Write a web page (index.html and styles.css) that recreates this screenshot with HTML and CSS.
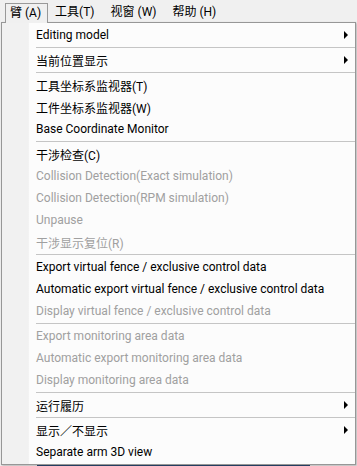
FILE: index.html
```html
<!DOCTYPE html>
<html>
<head>
    <title>Arm menu</title>
    <link rel="stylesheet" href="styles.css">
</head>
<body>
    <div class="menubar">
        <span class="top-item open">臂 (A)</span>
        <span class="top-item">工具(T)</span>
        <span class="top-item">视窗 (W)</span>
        <span class="top-item">帮助 (H)</span>
    </div>

    <div class="dropdown">
        <div class="item sub">Editing model<i class="arrow"></i></div>
        <div class="sep"></div>
        <div class="item sub">当前位置显示<i class="arrow"></i></div>
        <div class="sep"></div>
        <div class="item">工具坐标系监视器(T)</div>
        <div class="item">工件坐标系监视器(W)</div>
        <div class="item">Base Coordinate Monitor</div>
        <div class="sep"></div>
        <div class="item">干涉检查(C)</div>
        <div class="item off">Collision Detection(Exact simulation)</div>
        <div class="item off">Collision Detection(RPM simulation)</div>
        <div class="item off">Unpause</div>
        <div class="item off">干涉显示复位(R)</div>
        <div class="sep"></div>
        <div class="item">Export virtual fence / exclusive control data</div>
        <div class="item">Automatic export virtual fence / exclusive control data</div>
        <div class="item off">Display virtual fence / exclusive control data</div>
        <div class="sep"></div>
        <div class="item off">Export monitoring area data</div>
        <div class="item off">Automatic export monitoring area data</div>
        <div class="item off">Display monitoring area data</div>
        <div class="sep"></div>
        <div class="item sub">运行履历<i class="arrow"></i></div>
        <div class="sep"></div>
        <div class="item sub">显示／不显示<i class="arrow"></i></div>
        <div class="item">Separate arm 3D view</div>
    </div>
    <div class="strip"></div>
</body>
</html>
```

FILE: styles.css
```css
body {
    margin: 0;
    width: 357px;
    height: 466px;
    overflow: hidden;
    background-color: #f0f0f0;
    font-family: Roboto, 'Noto Sans CJK SC', sans-serif;
    font-size: 12px;
    color: #000;
}

.menubar {
    display: flex;
    height: 19px;
    padding: 3px 0 0 5px;
}

.top-item {
    padding: 0 5px;
    line-height: 18px;
    margin-right: 6px;
}

.top-item.open {
    position: relative;
    z-index: 2;
    height: 19px;
    border: 1px solid #999;
    border-bottom: none;
    background-color: #f0f0f0;
    padding: 0 6px 0 4px;
    margin-right: 2px;
}

.dropdown {
    position: relative;
    z-index: 1;
    margin-left: 1px;
    width: 353px;
    border: 1px solid #979797;
    padding: 1px 0;
    background: linear-gradient(to right, #f1f1f1 0, #f1f1f1 26px, #e9e9e9 26px, #fcfcfc 27px, #fcfcfc 100%);
    box-shadow: 1px 1px 2px rgba(0, 0, 0, 0.25);
}

.item {
    display: flex;
    align-items: center;
    height: 22px;
    padding-left: 34px;
    padding-right: 7px;
    white-space: nowrap;
}

.item.off {
    color: #a0a0a0;
}

.arrow {
    margin-left: auto;
    width: 0;
    height: 0;
    border-left: 4px solid #000;
    border-top: 4px solid transparent;
    border-bottom: 4px solid transparent;
}

.sep {
    height: 3px;
    margin-left: 34px;
    background: linear-gradient(#c5c5c5, #c5c5c5) 0 1px / 100% 1px no-repeat;
}

.strip {
    margin: 0 0 0 37px;
    width: 273px;
    height: 2px;
    background-color: #2c4a74;
}
```
